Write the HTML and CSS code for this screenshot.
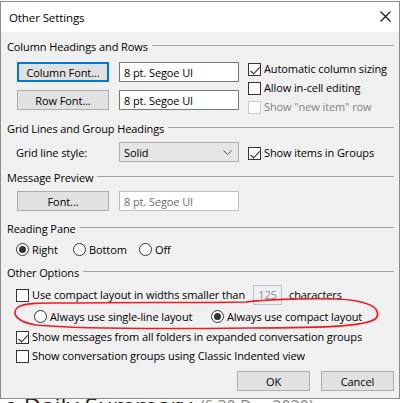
FILE: index.html
```html
<!DOCTYPE html>
<html>
<head>
<meta charset="utf-8">
<link rel="stylesheet" href="styles.css">
</head>
<body>
<div class="dialog">
  <div class="titlebar">
    <span class="title">Other Settings</span>
    <svg class="close" width="11" height="11" viewBox="0 0 11 11"><path d="M0.5 0.5 L10.5 10.5 M10.5 0.5 L0.5 10.5" stroke="#111" stroke-width="1.1" fill="none"/></svg>
  </div>
  <div class="content">
    <div class="head h1"><span>Column Headings and Rows</span><i></i></div>
    <div class="grid1">
      <div class="fontcol">
        <div class="fontrow"><div class="btn default">Column Font...</div><div class="tb">8 pt. Segoe UI</div></div>
        <div class="fontrow"><div class="btn">Row Font...</div><div class="tb">8 pt. Segoe UI</div></div>
      </div>
      <div class="checkcol">
        <div class="chk"><span class="box on"></span><span>Automatic column sizing</span></div>
        <div class="chk"><span class="box"></span><span>Allow in-cell editing</span></div>
        <div class="chk disabled"><span class="box"></span><span>Show "new item" row</span></div>
      </div>
    </div>

    <div class="head h2"><span>Grid Lines and Group Headings</span><i></i></div>
    <div class="row2">
      <span class="lbl">Grid line style:</span>
      <div class="select"><span>Solid</span><svg width="9" height="5" viewBox="0 0 9 5"><path d="M0.5 0.5 L4.5 4.5 L8.5 0.5" stroke="#555" fill="none"/></svg></div>
      <div class="chk ml9"><span class="box on"></span><span>Show items in Groups</span></div>
    </div>

    <div class="head h3"><span>Message Preview</span><i></i></div>
    <div class="row3">
      <div class="btn">Font...</div><div class="tb dis">8 pt. Segoe UI</div>
    </div>

    <div class="head h4"><span>Reading Pane</span><i></i></div>
    <div class="row4">
      <div class="rad w57"><span class="circ on"></span><span>Right</span></div>
      <div class="rad w66"><span class="circ"></span><span>Bottom</span></div>
      <div class="rad"><span class="circ"></span><span>Off</span></div>
    </div>

    <div class="head h5"><span>Other Options</span><i></i></div>
    <div class="row5a">
      <div class="chk"><span class="box"></span><span>Use compact layout in widths smaller than</span></div>
      <div class="spin">125</div>
      <span>characters</span>
    </div>
    <div class="row5b">
      <div class="rad w177"><span class="circ"></span><span>Always use single-line layout</span></div>
      <div class="rad"><span class="circ on"></span><span>Always use compact layout</span></div>
    </div>
    <div class="row5c">
      <div class="chk"><span class="box on"></span><span>Show messages from all folders in expanded conversation groups</span></div>
    </div>
    <div class="row5d">
      <div class="chk"><span class="box"></span><span>Show conversation groups using Classic Indented view</span></div>
    </div>
    <div class="actions">
      <div class="btn act">OK</div>
      <div class="btn act">Cancel</div>
    </div>
  </div>
  <svg class="annot" width="400" height="398" viewBox="0 1 400 398">
    <path d="M70 303 C120 302 200 303 246 302 C262 300 300 298 336 299 C366 300 381 307 377 317 C372 326 330 328 250 328 C170 329 80 329 36 325 C16 322 11 313 18 307 C27 302 48 303 70 303" stroke="#ec1c24" stroke-width="1.6" fill="none"/>
  </svg>
</div>
<div class="behind"><span class="big">e Daily Summary</span><span class="small">(§ 30 Dec 2020)</span></div>
</body>
</html>
```

FILE: styles.css
```css
html, body {
  margin: 0;
  padding: 0;
  background: #ffffff;
}
body {
  font-family: "Open Sans", "Noto Sans", sans-serif;
  font-size: 11px;
  color: #000;
  width: 404px;
  height: 403px;
  overflow: hidden;
}
.dialog {
  position: relative;
  margin-top: 1px;
  width: 400px;
  height: 398px;
  box-sizing: border-box;
  border: 1px solid #8c8c8c;
  background: #f0f0f0;
  letter-spacing: -0.1px;
}
.titlebar {
  height: 30px;
  background: #fff;
  display: flex;
  align-items: center;
  justify-content: space-between;
  padding: 0 8px 0 8px;
}
.title {
  font-size: 11.5px;
}
.close {
  margin-top: -2px;
}
.content {
  height: 366px;
  box-sizing: border-box;
  padding: 0 5px 0 6px;
  display: flex;
  flex-direction: column;
}
.head {
  display: flex;
  align-items: center;
  height: 16px;
  gap: 4px;
  white-space: nowrap;
}
.head i {
  flex: 1;
  height: 0;
  border-top: 1px solid #a0a0a0;
  margin-top: -1px;
}
.h1 { margin-top: 6px; }
.h2 { margin-top: 4px; }
.h3 { margin-top: 7px; }
.h4 { margin-top: 9px; }
.h5 { margin-top: 7px; }

.grid1 {
  margin-top: 5px;
  display: flex;
  padding-left: 10px;
}
.fontcol {
  padding-top: 3px;
  display: flex;
  flex-direction: column;
  gap: 8px;
}
.fontrow {
  display: flex;
  gap: 10px;
}
.checkcol {
  margin-left: 9px;
  display: flex;
  flex-direction: column;
}
.btn {
  box-sizing: border-box;
  width: 92px;
  height: 20px;
  border: 1px solid #adadad;
  background: #e1e1e1;
  display: flex;
  align-items: center;
  justify-content: center;
  white-space: nowrap;
}
.btn.default {
  border: 2px solid #0078d7;
}
.tb {
  box-sizing: border-box;
  width: 120px;
  height: 20px;
  border: 1px solid #7a7a7a;
  background: #fff;
  padding-left: 4px;
  display: flex;
  align-items: center;
  white-space: nowrap;
}
.tb.dis {
  border-color: #bfbfbf;
  color: #6d6d6d;
}
.chk {
  display: flex;
  align-items: center;
  height: 19px;
  gap: 3px;
  white-space: nowrap;
}
.box {
  box-sizing: border-box;
  width: 13px;
  height: 13px;
  border: 1px solid #333;
  background: #fff;
  flex: none;
  position: relative;
  margin-top: 2px;
}
.box.on::after {
  content: "";
  position: absolute;
  left: 3px;
  top: 0px;
  width: 7px;
  height: 4px;
  border-left: 1px solid #222;
  border-bottom: 1px solid #222;
  transform: translate(-1px, 3px) rotate(-48deg) scaleX(1.15);
  transform-origin: center;
}
.chk.disabled { color: #838383; }
.chk.disabled .box { border-color: #cccccc; }
.ml9 { margin-left: 9px; }

.row2 {
  margin-top: 6px;
  height: 20px;
  display: flex;
  align-items: center;
  padding-left: 9px;
}
.lbl {
  width: 103px;
}
.select {
  box-sizing: border-box;
  width: 120px;
  height: 20px;
  border: 1px solid #adadad;
  background: #e5e5e5;
  display: flex;
  align-items: center;
  justify-content: space-between;
  padding: 0 6px 0 4px;
}
.select svg { margin-top: 1px; }

.row3 {
  margin-top: 6px;
  display: flex;
  gap: 10px;
  padding-left: 10px;
}

.row4 {
  margin-top: 5px;
  height: 16px;
  display: flex;
  align-items: center;
  padding-left: 9px;
}
.rad {
  display: flex;
  align-items: center;
  gap: 3px;
  white-space: nowrap;
}
.circ {
  box-sizing: border-box;
  width: 13px;
  height: 13px;
  border: 1px solid #333;
  border-radius: 50%;
  background: #fff;
  flex: none;
  position: relative;
  margin-top: 1px;
}
.circ.on::after {
  content: "";
  position: absolute;
  left: 2px;
  top: 2px;
  width: 7px;
  height: 7px;
  border-radius: 50%;
  background: #333;
}
.w57 { width: 57px; }
.w66 { width: 66px; }
.w177 { width: 177px; }

.row5a {
  margin-top: 5px;
  height: 19px;
  display: flex;
  align-items: center;
  padding-left: 9px;
  white-space: nowrap;
}
.spin {
  box-sizing: border-box;
  width: 29px;
  height: 20px;
  margin-left: 8px;
  margin-right: 7px;
  border: 1px solid #b4c2d5;
  background: #f0f0f0;
  color: #8a8a8a;
  display: flex;
  align-items: center;
  justify-content: center;
}
.row5b {
  margin-top: 2px;
  height: 20px;
  display: flex;
  align-items: center;
  padding-left: 27px;
}
.row5c {
  margin-top: 1px;
  padding-left: 9px;
}
.row5d {
  padding-left: 9px;
}
.actions {
  margin-top: 6px;
  display: flex;
  justify-content: flex-end;
  gap: 11px;
}
.btn.act {
  width: 73px;
}
.annot {
  position: absolute;
  left: -1px;
  top: -1px;
  pointer-events: none;
}
.behind {
  height: 4px;
  overflow: hidden;
  white-space: nowrap;
  padding-left: 4px;
}
.big {
  display: inline-block;
  font-family: "Open Sans", sans-serif;
  font-size: 24px;
  line-height: 24px;
  color: #222;
  margin-top: -5px;
  vertical-align: top;
}
.small {
  display: inline-block;
  font-size: 16px;
  line-height: 16px;
  color: #888;
  margin-left: 8px;
  vertical-align: top;
  margin-top: -1px;
}
```
